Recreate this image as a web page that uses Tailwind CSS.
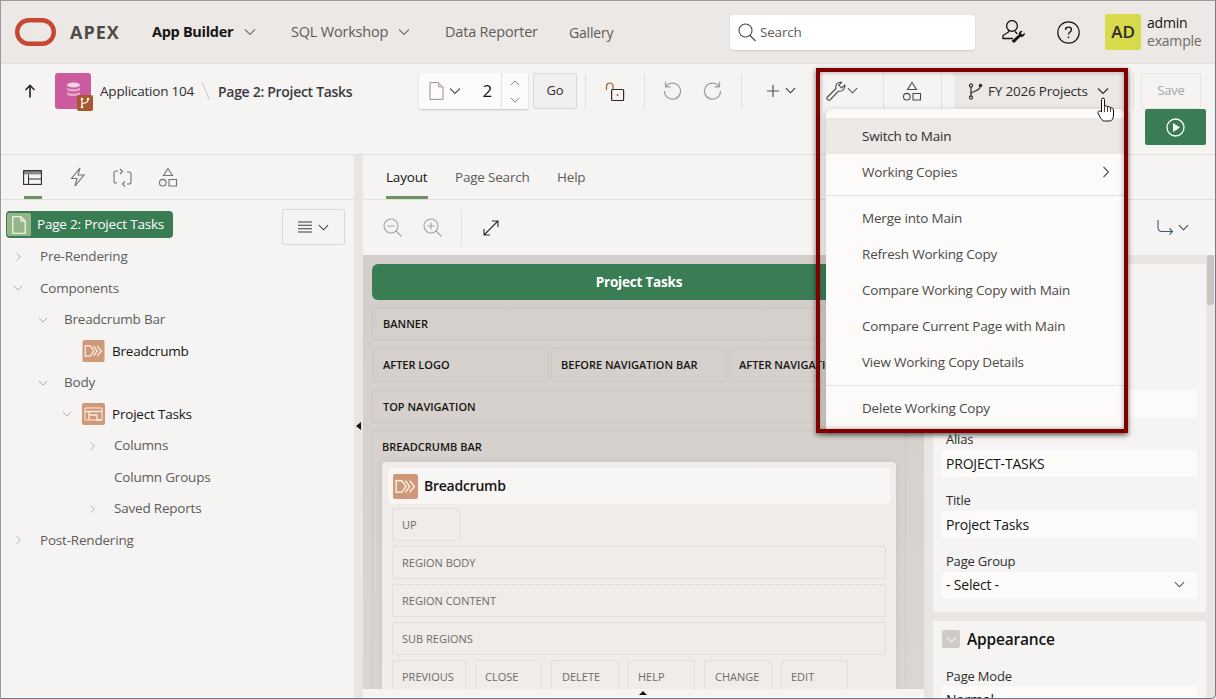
<!DOCTYPE html>
<html lang="en">
<head>
<meta charset="UTF-8">
<title>APEX Page Designer</title>
<script src="https://cdn.jsdelivr.net/npm/@tailwindcss/browser@4"></script>
</head>
<body class="bg-[#f5f4f2]">
<svg class="hidden">
  <symbol id="down" viewBox="0 0 12 12"><path d="M1 3.5 6 8.5 11 3.5" fill="none" stroke="currentColor" stroke-width="1.1"/></symbol>
  <symbol id="right" viewBox="0 0 12 12"><path d="M3.5 1 8.5 6 3.5 11" fill="none" stroke="currentColor" stroke-width="1.1"/></symbol>
  <symbol id="shapes" viewBox="0 0 20 20"><path d="M10 1.5 14.5 8.5H5.500Z M11 12.500H18.500V19H11Z" fill="none" stroke="currentColor" stroke-width="1.100"/><circle cx="4.800" cy="15.700" r="3.300" fill="none" stroke="currentColor" stroke-width="1.100"/></symbol>
  <symbol id="crumb" viewBox="0 0 24 24"><rect width="24" height="24" rx="2" fill="#cf9878"/><path d="M3 6.500H8.500L12.500 12 8.500 17.500H3Z M12 6.500 16 12 12 17.500 M16 6.500 20.500 12 16 17.500" fill="none" stroke="#fbeee2" stroke-width="1.400"/></symbol>
</svg>
<div class="relative w-[1216px] h-[699px] overflow-hidden flex flex-col font-['Open_Sans',sans-serif] text-[13.5px] tracking-[-0.2px] text-[#5f5b57] bg-[#f5f4f2]">

  <!-- top header -->
  <header class="h-[64px] shrink-0 bg-[#ebe8e5] flex items-center border-b border-[#e3e0dd] pt-[1px]">
    <svg class="ml-[15px] w-[41px] h-[28px]" viewBox="0 0 41 28"><rect x="2.200" y="2.200" width="36.600" height="23.600" rx="11.800" fill="none" stroke="#c74634" stroke-width="4.400"/></svg>
    <span class="ml-[14px] w-[82px] text-[18px] font-bold tracking-[1px] text-[#4d4a47]">APEX</span>
    <span class="font-bold text-[14.500px] text-[#161513] tracking-[-0.3px] w-[84px] whitespace-nowrap">App Builder</span>
    <svg class="ml-[8px] w-[12px] h-[12px] text-[#77726e]"><use href="#down"/></svg>
    <span class="ml-[35px] w-[98px] text-[14.500px] whitespace-nowrap">SQL Workshop</span>
    <svg class="ml-[9px] w-[12px] h-[12px] text-[#77726e]"><use href="#down"/></svg>
    <span class="ml-[35px] w-[93px] text-[14.500px] whitespace-nowrap">Data Reporter</span>
    <span class="ml-[31px] w-[46px] text-[14px]">Gallery</span>
    <div class="ml-[115px] w-[245px] h-[35px] bg-white rounded-[3px] shadow-[0_1px_2px_rgba(0,0,0,.12)] flex items-center pl-[8px]">
      <svg class="w-[18px] h-[19px]" viewBox="0 0 18 19"><circle cx="7.500" cy="7.500" r="6.500" fill="none" stroke="#4b4844" stroke-width="1.100"/><path d="M12 12.500 17.500 18" stroke="#4b4844" stroke-width="1.100"/></svg>
      <span class="ml-[4px]">Search</span>
    </div>
    <svg class="ml-[27px] w-[25px] h-[24px]" viewBox="0 0 25 24"><circle cx="10" cy="6" r="5.400" fill="none" stroke="#161513" stroke-width="1.300"/><path d="M6.500 10.500V12L1 15.500V18.500H11M13 11.500 15.500 14" fill="none" stroke="#161513" stroke-width="1.300"/><path d="M9.500 21 17 14.500C16.500 12.500 18 10.500 20.800 10.800L18.800 13 20.500 14.700 22.800 12.700C23.300 15.300 21 17.300 18.500 16.800L12 23Z" fill="#161513"/></svg>
    <svg class="ml-[30px] w-[23px] h-[23px]" viewBox="0 0 23 23"><circle cx="11.500" cy="11.500" r="10.700" fill="none" stroke="#161513" stroke-width="1.200"/><path d="M8.500 9c0-1.800 1.300-2.800 3-2.800s3 1 3 2.600c0 2.300-3 2.300-3 4.700" fill="none" stroke="#161513" stroke-width="1.300"/><circle cx="11.500" cy="16.300" r=".9" fill="#161513"/></svg>
    <div class="ml-[25px] w-[36px] h-[36px] rounded-[2px] bg-[#d6da4b] flex items-center justify-center text-[17px] font-semibold text-[#2b2a27]">AD</div>
    <div class="ml-[6px] leading-[18px] text-[14px]">
      <div class="text-[#161513]">admin</div>
      <div class="text-[#6f6b67]">example</div>
    </div>
  </header>

  <!-- page designer toolbar -->
  <div class="h-[91px] shrink-0 flex items-start border-b border-[#e3e0dd] pt-[9px]">
    <svg class="ml-[24px] mt-[11px] w-[12px] h-[14px]" viewBox="0 0 12 14"><path d="M6 13.500V1.500M1.500 6 6 1.500 10.500 6" fill="none" stroke="#2d2c2a" stroke-width="1.700"/></svg>
    <div class="ml-[19px] w-[36px] h-[36px] rounded-[3px] bg-[#cb5a9e] relative flex items-center justify-center">
      <svg class="w-[15px] h-[18px] -mt-[1px]" viewBox="0 0 15 18"><ellipse cx="7.500" cy="3" rx="6.500" ry="2.500" fill="#f3d4e6"/><path d="M1 5.500c2 2 11 2 13 0V8c-2 2-11 2-13 0ZM1 10c2 2 11 2 13 0v2.500c-2 2-11 2-13 0Z" fill="#e6a6cc"/></svg>
      <div class="absolute -right-[2px] -bottom-[2px] w-[16px] h-[16px] rounded-[2px] bg-[#a8582c] flex items-center justify-center">
        <svg class="w-[12px] h-[12px]" viewBox="0 0 12 12"><path d="M3 3V9M3 7.500C3 6 9 6.500 9 3" fill="none" stroke="#fff" stroke-width="1.200"/><circle cx="3" cy="2" r="1.300" fill="#fff"/><circle cx="3" cy="10" r="1.300" fill="#fff"/><circle cx="9" cy="2" r="1.300" fill="#fff"/></svg>
      </div>
    </div>
    <span class="ml-[9px] mt-[8px] w-[95px] text-[#2f2e2c] whitespace-nowrap">Application 104</span>
    <svg class="mt-[8px] ml-[6px] w-[10px] h-[20px]" viewBox="0 0 10 20"><path d="M1 1 8.500 19" stroke="#c9cdc5" stroke-width="1"/></svg>
    <span class="ml-[7px] mt-[8px] w-[135px] text-[14px] tracking-[-0.3px] font-semibold text-[#3a3a40] whitespace-nowrap">Page 2: Project Tasks</span>

    <div class="ml-[66px] w-[109px] h-[36px] bg-[#fcfbfa] rounded-[2px] shadow-[0_1px_2px_rgba(0,0,0,.2)] flex items-center">
      <svg class="ml-[10px] w-[15px] h-[18px]" viewBox="0 0 15 18"><path d="M1 .6H9.500L14 5V17.400H1Z" fill="none" stroke="#9a8f87" stroke-width="1"/><path d="M9.500 .6V5H14" fill="#d9d0ca" stroke="#9a8f87" stroke-width=".6"/></svg>
      <svg class="ml-[5px] w-[12px] h-[12px] text-[#55524e]"><use href="#down"/></svg>
      <span class="ml-auto mr-[9px] text-[17px] text-[#161513]">2</span>
      <div class="w-[27px] h-full border-l border-[#e3e0dd] flex flex-col items-center justify-center gap-[7px]">
        <svg class="w-[10px] h-[10px] rotate-180 text-[#77726e]"><use href="#down"/></svg>
        <svg class="w-[10px] h-[10px] text-[#77726e]"><use href="#down"/></svg>
      </div>
    </div>
    <div class="ml-[5px] w-[44px] h-[36px] border border-[#dcd9d5] rounded-[2px] bg-[#f2f0ee] text-[#2f2e2c] flex items-center justify-center text-[13px]">Go</div>
    <div class="ml-[8px] w-px h-[36px] bg-[#e3e0dd]"></div>
    <svg class="ml-[19px] mt-[9px] w-[20px] h-[20px]" viewBox="0 0 20 20"><path d="M1.500 8V4.500C1.500 2.500 3 1 5 1s3 1.500 3 3.500V7" fill="none" stroke="#a85b30" stroke-width="1.200"/><rect x="6.600" y="7.500" width="12" height="11" rx="1" fill="none" stroke="#2d2c2a" stroke-width="1.200"/><circle cx="12.500" cy="13" r="1" fill="#a85b30"/></svg>
    <div class="ml-[19px] w-px h-[36px] bg-[#e3e0dd]"></div>
    <svg class="ml-[18px] mt-[8px] w-[19px] h-[19px]" viewBox="0 0 19 19"><path d="M3 5.500A8 8 0 1 1 1.500 10M2.500 .8V5.800H7.500" fill="none" stroke="#a19d99" stroke-width="1.200"/></svg>
    <svg class="ml-[21px] mt-[8px] w-[19px] h-[19px]" viewBox="0 0 19 19"><path d="M16 5.500A8 8 0 1 0 17.500 10M16.500 .8V5.800H11.500" fill="none" stroke="#a19d99" stroke-width="1.200"/></svg>
    <div class="ml-[19px] w-px h-[36px] bg-[#e3e0dd]"></div>
    <svg class="ml-[25px] mt-[12px] w-[12px] h-[12px]" viewBox="0 0 12 12"><path d="M6 0V12M0 6H12" stroke="#55524e" stroke-width="1.200"/></svg>
    <svg class="ml-[6px] mt-[12px] w-[11px] h-[11px] text-[#2d2c2a]"><use href="#down"/></svg>
    <svg class="ml-[30px] mt-[8px] w-[21px] h-[20px]" viewBox="0 0 21 20"><path d="M1 16.500 10 7.500C9 4 11.500 .8 15.500 1.300L12.800 4.300 15.800 7 18.800 4.200C19.500 8 16 11 12.500 10L4 19C2.500 20 0 18 1 16.500Z" fill="none" stroke="#4d4a47" stroke-width="1.100"/></svg>
    <svg class="mt-[12px] w-[11px] h-[11px] text-[#4d4a47]"><use href="#down"/></svg>
    <div class="ml-[25px] w-px h-[36px] bg-[#e3e0dd]"></div>
    <svg class="ml-[18px] mt-[8px] w-[20px] h-[20px] text-[#4d4a47]"><use href="#shapes"/></svg>
    <div class="ml-[19px] w-px h-[36px] bg-[#e3e0dd]"></div>
    <div class="ml-[12px] w-[170px] h-[36px] bg-[#ebe8e5] rounded-[2px] flex items-center pl-[14px] text-[#2f2e2c]">
      <svg class="w-[15px] h-[17px]" viewBox="0 0 15 17"><path d="M3 3V14M3 11C3 7.500 12 9 12 3.500" fill="none" stroke="#312d2a" stroke-width="1.200"/><circle cx="3" cy="2.500" r="1.600" fill="none" stroke="#312d2a" stroke-width="1.100"/><circle cx="3" cy="14.500" r="1.600" fill="none" stroke="#312d2a" stroke-width="1.100"/><circle cx="12.500" cy="2.500" r="1.800" fill="#312d2a"/></svg>
      <span class="ml-[5px] whitespace-nowrap">FY 2026 Projects</span>
      <svg class="ml-[9px] w-[12px] h-[12px] text-[#2d2c2a]"><use href="#down"/></svg>
    </div>
    <div class="ml-[9px] w-px h-[36px] bg-[#e3e0dd]"></div>
    <div class="flex flex-col w-[65px] ml-[7px]">
      <div class="w-[60px] h-[36px] border border-[#e8e6e3] rounded-[2px] text-[#a8a4a0] text-[13px] flex items-center justify-center">Save</div>
      <div class="ml-[4px] w-[61px] h-[36px] rounded-[2px] bg-[#3a7d55] flex items-center justify-center">
        <svg class="w-[19px] h-[19px]" viewBox="0 0 19 19"><circle cx="9.500" cy="9.500" r="8.500" fill="none" stroke="#fff" stroke-width="1.300"/><path d="M7 5 14 9.500 7 14Z" fill="#fff"/></svg>
      </div>
    </div>
  </div>

  <!-- panels -->
  <div class="flex flex-1 min-h-0">
    <!-- tree -->
    <aside class="w-[354px] shrink-0 flex flex-col">
      <div class="h-[45px] shrink-0 border-b border-[#e3e0dd] flex items-center relative pl-[23px] gap-[27px]">
        <svg class="w-[19px] h-[15px]" viewBox="0 0 19 15"><rect x=".6" y=".6" width="17.800" height="3.800" fill="#8c8884"/><rect x=".6" y=".6" width="17.800" height="13.800" fill="none" stroke="#2d2c2a" stroke-width="1.100"/><path d="M5.500 4.500V14.400M5.500 9H18.400" stroke="#2d2c2a" stroke-width="1"/></svg>
        <svg class="w-[15px] h-[20px] ml-[1px]" viewBox="0 0 15 20"><path d="M10 1 1.500 11.500H7L5 19 14 8H8Z" fill="none" stroke="#77726e" stroke-width="1.100"/></svg>
        <svg class="w-[19px] h-[19px] ml-[1px]" viewBox="0 0 19 19"><path d="M5 3H3C1.800 3 1 3.800 1 5V13C1 14.200 1.800 15 3 15H4M14 16H16C17.200 16 18 15.200 18 14V6C18 4.800 17.200 4 16 4H14M7 1 9.500 3.500 7 6M12 13.500 9.500 16 12 18.500" fill="none" stroke="#77726e" stroke-width="1.100"/></svg>
        <svg class="w-[20px] h-[20px] -ml-[1px] text-[#77726e]"><use href="#shapes"/></svg>
        <div class="absolute left-[24px] bottom-0 w-[18px] h-[3px] bg-[#6f9463]"></div>
      </div>
      <div class="relative pt-[11px]">
        <div class="ml-[6px] w-[167px] h-[27px] rounded-[4px] bg-[#3a7d55] flex items-center pl-[1px] text-white">
          <span class="w-[24px] h-[23px] rounded-[2px] bg-[#93b587] flex items-center justify-center">
            <svg class="w-[14px] h-[18px]" viewBox="0 0 14 18"><path d="M.8 .8H9L13.200 5V17.200H.8Z M9 .8V5H13.200" fill="none" stroke="#fff" stroke-width="1.100"/></svg>
          </span>
          <span class="ml-[6px] whitespace-nowrap">Page 2: Project Tasks</span>
        </div>
        <div class="absolute left-[282px] top-[9px] w-[63px] h-[36px] border border-[#dcd9d5] rounded-[2px] flex items-center justify-center gap-[6px]">
          <svg class="w-[14px] h-[12px]" viewBox="0 0 14 12"><path d="M0 1H14M0 4.300H14M0 7.700H14M0 11H14" stroke="#3f3d3a" stroke-width="1.100"/></svg>
          <svg class="w-[11px] h-[11px] text-[#3f3d3a]"><use href="#down"/></svg>
        </div>
        <div class="mt-[3px] leading-[31.500px] whitespace-nowrap">
          <div class="flex items-center h-[31.500px] pl-[14px]"><svg class="w-[9px] h-[10px] text-[#a5a19d]"><use href="#right"/></svg><span class="ml-[17px]">Pre-Rendering</span></div>
          <div class="flex items-center h-[31.500px] pl-[13px]"><svg class="w-[10px] h-[10px] text-[#a5a19d]"><use href="#down"/></svg><span class="ml-[17px]">Components</span></div>
          <div class="flex items-center h-[31.500px] pl-[38px]"><svg class="w-[10px] h-[10px] text-[#a5a19d]"><use href="#down"/></svg><span class="ml-[16px]">Breadcrumb Bar</span></div>
          <div class="flex items-center h-[31.500px] pl-[82px] text-[#161513]"><svg class="w-[23px] h-[22px]"><use href="#crumb"/></svg><span class="ml-[7px]">Breadcrumb</span></div>
          <div class="flex items-center h-[31.500px] pl-[38px]"><svg class="w-[10px] h-[10px] text-[#a5a19d]"><use href="#down"/></svg><span class="ml-[16px]">Body</span></div>
          <div class="flex items-center h-[31.500px] pl-[62px] text-[#161513]">
            <svg class="w-[10px] h-[10px] text-[#a5a19d]"><use href="#down"/></svg>
            <svg class="ml-[10px] w-[23px] h-[22px]" viewBox="0 0 23 22"><rect width="23" height="22" rx="2" fill="#cf9878"/><path d="M3 5H20V17H3Z" fill="none" stroke="#fbeee2" stroke-width="1"/><path d="M3 8.500H20M7 8.500V17M7 12H15V17H20" fill="none" stroke="#fbeee2" stroke-width="1.300"/></svg>
            <span class="ml-[7px]">Project Tasks</span>
          </div>
          <div class="flex items-center h-[31.500px] pl-[88px]"><svg class="w-[9px] h-[10px] text-[#a5a19d]"><use href="#right"/></svg><span class="ml-[17px]">Columns</span></div>
          <div class="flex items-center h-[31.500px] pl-[114px]">Column Groups</div>
          <div class="flex items-center h-[31.500px] pl-[88px]"><svg class="w-[9px] h-[10px] text-[#a5a19d]"><use href="#right"/></svg><span class="ml-[17px]">Saved Reports</span></div>
          <div class="flex items-center h-[31.500px] pl-[14px]"><svg class="w-[9px] h-[10px] text-[#a5a19d]"><use href="#right"/></svg><span class="ml-[17px]">Post-Rendering</span></div>
        </div>
      </div>
    </aside>

    <!-- splitter -->
    <div class="w-[9px] shrink-0 bg-[#e8e5e2] relative">
      <div class="absolute left-[2px] top-[267px] w-0 h-0 border-y-[4px] border-y-transparent border-r-[5px] border-r-[#161513]"></div>
    </div>

    <!-- layout and properties -->
    <div class="flex-1 min-w-0 flex flex-col">
      <div class="h-[45px] shrink-0 border-b border-[#e3e0dd] flex items-center pl-[23px] pt-[1px] relative">
        <span class="w-[42px] text-[#161513]">Layout</span>
        <span class="ml-[27px] w-[75px] whitespace-nowrap">Page Search</span>
        <span class="ml-[27px]">Help</span>
        <div class="absolute left-[23px] bottom-0 w-[42px] h-[3px] bg-[#6f9463]"></div>
      </div>
      <div class="h-[55px] shrink-0 flex items-center pl-[20px]">
        <svg class="w-[19px] h-[19px]" viewBox="0 0 19 19"><circle cx="8" cy="8" r="7" fill="none" stroke="#a5a19d" stroke-width="1.100"/><path d="M13 13 18.500 18.500M4.500 8H11.500" stroke="#a5a19d" stroke-width="1.100"/></svg>
        <svg class="ml-[21px] w-[19px] h-[19px]" viewBox="0 0 19 19"><circle cx="8" cy="8" r="7" fill="none" stroke="#a5a19d" stroke-width="1.100"/><path d="M13 13 18.500 18.500M4.500 8H11.500M8 4.500V11.500" stroke="#a5a19d" stroke-width="1.100"/></svg>
        <div class="ml-[19px] w-px h-[36px] bg-[#e3e0dd]"></div>
        <svg class="ml-[21px] w-[16px] h-[16px]" viewBox="0 0 16 16"><path d="M1 15 15 1M9 1H15V7M1 9V15H7" fill="none" stroke="#2d2c2a" stroke-width="1.100"/></svg>
        <svg class="ml-auto w-[17px] h-[17px]" viewBox="0 0 17 17"><path d="M1 1V8C1 11 2.500 12.500 5 12.500H15.500M12.500 9.500 15.500 12.500 12.500 15.500" fill="none" stroke="#3f5b78" stroke-width="1.100"/></svg>
        <svg class="ml-[4px] mr-[27px] w-[11px] h-[11px] text-[#3f3d3a]"><use href="#down"/></svg>
      </div>
      <div class="flex-1 min-h-0 flex bg-[#e8e5e2]">
        <!-- canvas -->
        <div class="w-[561px] shrink-0 flex flex-col">
          <div class="h-[434px] overflow-hidden bg-gradient-to-b from-[#d3cec9] to-[#dad6d1] pt-[9px] pl-[9px] text-[11px] font-semibold tracking-[0] text-[#161513]">
            <div class="w-[534px] h-[36px] rounded-[6px] bg-[#3a7d55] text-white text-[13.500px] font-bold tracking-[-0.2px] flex items-center justify-center">Project Tasks</div>
            <div class="mt-[7px] w-[534px] h-[33px] pl-[10px] pt-[1px] border border-dotted border-[#c2bdb8] rounded-[4px] flex items-center">BANNER</div>
            <div class="mt-[8px] flex gap-[2px] w-[532px] ml-[1px] h-[34px] whitespace-nowrap">
              <div class="w-[176px] pl-[9px] border border-dotted border-[#c2bdb8] rounded-[4px] flex items-center">AFTER LOGO</div>
              <div class="w-[176px] pl-[9px] border border-dotted border-[#c2bdb8] rounded-[4px] flex items-center">BEFORE NAVIGATION BAR</div>
              <div class="w-[176px] pl-[9px] border border-dotted border-[#c2bdb8] rounded-[4px] flex items-center">AFTER NAVIGATION BAR</div>
            </div>
            <div class="mt-[8px] w-[534px] h-[33px] pl-[10px] pt-[1px] border border-dotted border-[#c2bdb8] rounded-[4px] flex items-center">TOP NAVIGATION</div>
            <div class="mt-[7px] w-[534px] h-[280px] px-[9px] border border-dotted border-[#c2bdb8] rounded-t-[4px]">
              <div class="h-[31px] pt-[8px] leading-[16px]">BREADCRUMB BAR</div>
              <div class="bg-[#efecea] rounded-[4px] h-[240px] px-[6px] pt-[6px] font-normal text-[#6f6b67] shadow-[0_0_8px_rgba(0,0,0,.08)]">
                <div class="h-[36px] rounded-[4px] bg-[#f7f6f4] flex items-center pl-[5px] text-[14px] font-semibold tracking-[-0.25px] text-[#161513]">
                  <svg class="w-[25px] h-[25px]"><use href="#crumb"/></svg>
                  <span class="ml-[6px] -mt-[1px]">Breadcrumb</span>
                </div>
                <div class="mt-[4px] ml-[4px] w-[68px] h-[33px] pl-[9px] pt-[1px] border border-dotted border-[#d6d2ce] rounded-[2px] flex items-center">UP</div>
                <div class="mt-[5px] ml-[4px] w-[494px] h-[33px] pl-[9px] pt-[1px] border border-dotted border-[#d6d2ce] rounded-[2px] flex items-center">REGION BODY</div>
                <div class="mt-[5px] ml-[4px] w-[494px] h-[33px] pl-[9px] pt-[1px] border border-dotted border-[#d6d2ce] rounded-[2px] flex items-center">REGION CONTENT</div>
                <div class="mt-[5px] ml-[4px] w-[494px] h-[33px] pl-[9px] pt-[1px] border border-dotted border-[#d6d2ce] rounded-[2px] flex items-center">SUB REGIONS</div>
                <div class="mt-[5px] ml-[4px] flex h-[33px]">
                  <div class="w-[74px] pl-[9px] pt-[1px] border border-dotted border-[#d6d2ce] rounded-[2px] flex items-center">PREVIOUS</div>
                  <div class="ml-[9px] w-[67px] pl-[9px] pt-[1px] border border-dotted border-[#d6d2ce] rounded-[2px] flex items-center">CLOSE</div>
                  <div class="ml-[9px] w-[68px] pl-[10px] pt-[1px] border border-dotted border-[#d6d2ce] rounded-[2px] flex items-center">DELETE</div>
                  <div class="ml-[9px] w-[67px] pl-[9px] pt-[1px] border border-dotted border-[#d6d2ce] rounded-[2px] flex items-center">HELP</div>
                  <div class="ml-[9px] w-[68px] pl-[10px] pt-[1px] border border-dotted border-[#d6d2ce] rounded-[2px] flex items-center">CHANGE</div>
                  <div class="ml-[9px] w-[67px] pl-[9px] pt-[1px] border border-dotted border-[#d6d2ce] rounded-[2px] flex items-center">EDIT</div>
                </div>
              </div>
            </div>
          </div>
          <div class="flex-1 bg-[#f5f4f2] relative">
            <div class="absolute left-[276px] top-[2px] w-0 h-0 border-x-[4px] border-x-transparent border-b-[4px] border-b-[#161513]"></div>
          </div>
        </div>
        <!-- properties -->
        <div class="ml-[9px] w-[273px] shrink-0 h-[434px] mt-[9px] bg-[#f5f4f2] overflow-hidden text-[#2f2e2c]">
          <div class="h-[348px] pt-[126px] px-[9px]">
            <div class="h-[27px] rounded-[3px] bg-[#fcfbfa]"></div>
            <div class="mt-[13px] mb-[1px] h-[19px] pl-[4px] text-[13px] leading-[19px]">Alias</div>
            <div class="h-[27px] rounded-[3px] bg-[#fcfbfa] pl-[4px] flex items-center text-[14px] text-[#161513]">PROJECT-TASKS</div>
            <div class="mt-[14px] mb-[1px] h-[19px] pl-[4px] text-[13px] leading-[19px]">Title</div>
            <div class="h-[27px] rounded-[3px] bg-[#fcfbfa] pl-[4px] flex items-center text-[14px] text-[#161513]">Project Tasks</div>
            <div class="mt-[14px] mb-[1px] h-[19px] pl-[4px] text-[13px] leading-[19px]">Page Group</div>
            <div class="h-[27px] rounded-[3px] bg-[#fcfbfa] pl-[4px] pr-[12px] pb-[2px] flex items-center justify-between text-[14px] text-[#161513]">- Select -<svg class="w-[11px] h-[11px] text-[#55524e]"><use href="#down"/></svg></div>
          </div>
          <div class="h-[9px] bg-[#e8e5e2]"></div>
          <div class="px-[9px]">
            <div class="h-[36px] flex items-center">
              <span class="w-[18px] h-[18px] rounded-[2px] bg-[#cfcbc7] flex items-center justify-center"><svg class="w-[11px] h-[11px] text-[#f5f4f2]"><use href="#down"/></svg></span>
              <span class="ml-[7px] mt-[1px] text-[15.500px] font-semibold text-[#161513]">Appearance</span>
            </div>
            <div class="mt-[10px] h-[19px] pl-[4px] text-[13px] leading-[19px]">Page Mode</div>
            <div class="h-[27px] rounded-[3px] bg-[#fcfbfa] pl-[4px] flex items-center text-[14px] text-[#161513]">Normal</div>
          </div>
        </div>
      </div>
    </div>
  </div>

  <!-- properties scrollbar -->
  <div class="absolute left-[1207px] top-[255px] w-[7px] h-[50px] rounded-[3px] bg-[#c9c5c1]"></div>

  <!-- open branch menu with callout box -->
  <div class="absolute left-[826px] top-[109px] w-[298px] h-[322px] rounded-t-[6px] bg-[#fcfbfa] shadow-[0_2px_6px_rgba(0,0,0,.25)] pt-[9px] text-[#4d4a47]">
    <div class="h-[36px] bg-[#ebe8e5] pl-[36px] flex items-center text-[#312d2a]">Switch to Main</div>
    <div class="h-[36px] pl-[36px] pr-[12px] flex items-center justify-between">Working Copies<svg class="w-[12px] h-[12px] text-[#55524e]"><use href="#right"/></svg></div>
    <div class="mt-[5px] mb-[4px] h-px bg-[#e3e0dd]"></div>
    <div class="h-[36px] pl-[36px] flex items-center">Merge into Main</div>
    <div class="h-[36px] pl-[36px] flex items-center">Refresh Working Copy</div>
    <div class="h-[36px] pl-[36px] flex items-center">Compare Working Copy with Main</div>
    <div class="h-[36px] pl-[36px] flex items-center">Compare Current Page with Main</div>
    <div class="h-[36px] pl-[36px] flex items-center">View Working Copy Details</div>
    <div class="mt-[5px] mb-[4px] h-px bg-[#e3e0dd]"></div>
    <div class="h-[36px] pl-[36px] flex items-center">Delete Working Copy</div>
  </div>
  <div class="absolute left-[816px] top-[68px] w-[312px] h-[365px] border-[4px] border-[#800000] shadow-[0_2px_5px_rgba(0,0,0,.55),inset_0_0_5px_rgba(0,0,0,.35)] pointer-events-none"></div>

  <!-- mouse pointer -->
  <svg class="absolute left-[1097px] top-[97px] w-[18px] h-[25px]" viewBox="0 0 18 25"><path d="M4.500 14V2.500C4.500 .6 7.500 .6 7.500 2.500V9.500C8 8.500 10.500 8.500 10.500 10 11 9 13.500 9.500 13.500 11 14 10.500 16.500 11 16.500 13V18C16.500 21 15 24 13 24H7.500C5.500 24 4.500 22 3 20L1 16C.5 14 3 13 4.500 15Z" fill="#fff" stroke="#161513" stroke-width="1"/><path d="M7.500 10V15M10.500 10V15M13.500 11V15" stroke="#161513" stroke-width=".8"/></svg>

  <!-- window edge -->
  <div class="absolute inset-0 border border-[#9a9a9a] border-r-[#6d7f8d] border-b-[#6d7f8d] rounded-br-[5px] pointer-events-none"></div>
</div>
</body>
</html>
